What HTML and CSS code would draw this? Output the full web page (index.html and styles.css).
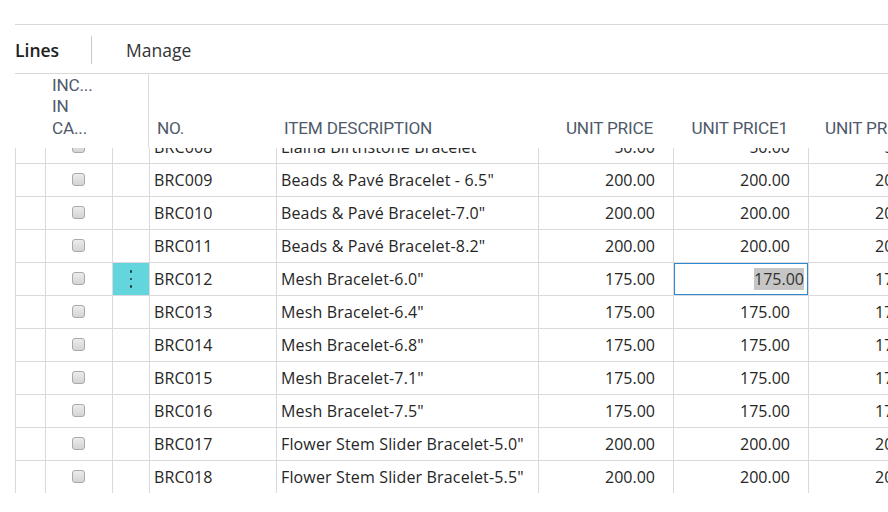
FILE: index.html
```html
<!DOCTYPE html>
<html>
<head>
<meta charset="utf-8">
<link rel="stylesheet" href="styles.css">
</head>
<body>
<div class="page">
  <div class="tabs">
    <span class="tab tab-active">Lines</span>
    <span class="tab-sep"></span>
    <span class="tab">Manage</span>
  </div>
  <div class="grid-wrap">
    <div class="head row-grid">
      <div class="hc hc-blank"></div>
      <div class="hc hc-inc">INC...<br>IN<br>CA...</div>
      <div class="hc hc-frozen-end"></div>
      <div class="hc">NO.</div>
      <div class="hc">ITEM DESCRIPTION</div>
      <div class="hc hc-num">UNIT PRICE</div>
      <div class="hc hc-num">UNIT PRICE1</div>
      <div class="hc hc-last">UNIT PRICE2</div>
    </div>
    <div class="body">
      <div class="rows">
        <div class="row row-grid"><div class="c c0"></div><div class="c c1"><span class="cb"></span></div><div class="c c2"></div><div class="c">BRC008</div><div class="c">Liaina Birthstone Bracelet</div><div class="c num">50.00</div><div class="c num">50.00</div><div class="c num">50.00</div></div>
        <div class="row row-grid"><div class="c c0"></div><div class="c c1"><span class="cb"></span></div><div class="c c2"></div><div class="c">BRC009</div><div class="c">Beads &amp; Pavé Bracelet - 6.5"</div><div class="c num">200.00</div><div class="c num">200.00</div><div class="c num">200.00</div></div>
        <div class="row row-grid"><div class="c c0"></div><div class="c c1"><span class="cb"></span></div><div class="c c2"></div><div class="c">BRC010</div><div class="c">Beads &amp; Pavé Bracelet-7.0"</div><div class="c num">200.00</div><div class="c num">200.00</div><div class="c num">200.00</div></div>
        <div class="row row-grid"><div class="c c0"></div><div class="c c1"><span class="cb"></span></div><div class="c c2"></div><div class="c">BRC011</div><div class="c">Beads &amp; Pavé Bracelet-8.2"</div><div class="c num">200.00</div><div class="c num">200.00</div><div class="c num">200.00</div></div>
        <div class="row row-grid"><div class="c c0"></div><div class="c c1"><span class="cb"></span></div><div class="c c2 c2-active"><span class="dots"><i></i><i></i><i></i></span></div><div class="c">BRC012</div><div class="c">Mesh Bracelet-6.0"</div><div class="c num">175.00</div><div class="c num c-edit"><span class="edit"><span class="sel">175.00</span></span></div><div class="c num">175.00</div></div>
        <div class="row row-grid"><div class="c c0"></div><div class="c c1"><span class="cb"></span></div><div class="c c2"></div><div class="c">BRC013</div><div class="c">Mesh Bracelet-6.4"</div><div class="c num">175.00</div><div class="c num">175.00</div><div class="c num">175.00</div></div>
        <div class="row row-grid"><div class="c c0"></div><div class="c c1"><span class="cb"></span></div><div class="c c2"></div><div class="c">BRC014</div><div class="c">Mesh Bracelet-6.8"</div><div class="c num">175.00</div><div class="c num">175.00</div><div class="c num">175.00</div></div>
        <div class="row row-grid"><div class="c c0"></div><div class="c c1"><span class="cb"></span></div><div class="c c2"></div><div class="c">BRC015</div><div class="c">Mesh Bracelet-7.1"</div><div class="c num">175.00</div><div class="c num">175.00</div><div class="c num">175.00</div></div>
        <div class="row row-grid"><div class="c c0"></div><div class="c c1"><span class="cb"></span></div><div class="c c2"></div><div class="c">BRC016</div><div class="c">Mesh Bracelet-7.5"</div><div class="c num">175.00</div><div class="c num">175.00</div><div class="c num">175.00</div></div>
        <div class="row row-grid"><div class="c c0"></div><div class="c c1"><span class="cb"></span></div><div class="c c2"></div><div class="c">BRC017</div><div class="c">Flower Stem Slider Bracelet-5.0"</div><div class="c num">200.00</div><div class="c num">200.00</div><div class="c num">200.00</div></div>
        <div class="row row-grid row-last"><div class="c c0"></div><div class="c c1"><span class="cb"></span></div><div class="c c2"></div><div class="c">BRC018</div><div class="c">Flower Stem Slider Bracelet-5.5"</div><div class="c num">200.00</div><div class="c num">200.00</div><div class="c num">200.00</div></div>
      </div>
    </div>
  </div>
</div>
</body>
</html>
```

FILE: styles.css
```css
* { box-sizing: border-box; }
html, body { margin: 0; padding: 0; background: #fff; }
body { width: 888px; height: 512px; overflow: hidden; }

.page {
  padding: 24px 0 0 15px;
  font-family: "Open Sans", "Noto Sans", sans-serif;
  color: #212121;
}

.tabs {
  height: 50px;
  border-top: 1px solid #d8d8d8;
  border-bottom: 1px solid #d8d8d8;
  display: flex;
  align-items: center;
  font-size: 17.5px;
  padding-top: 2px;
}
.tab { color: #333; }
.tab-active { font-weight: 600; color: #212121; }
.tab-sep {
  width: 1px;
  height: 28px;
  background: #c8c8c8;
  margin: 0 34px 0 32px;
}

.grid-wrap { width: 1000px; }

.row-grid {
  display: grid;
  grid-template-columns: 30px 67px 37px 127px 262px 135px 135px 135px;
}

.head {
  height: 74px;
  font-family: "Roboto", "DejaVu Sans Condensed", sans-serif;
  font-size: 17.2px;
  color: #4f5a6a;
  letter-spacing: -0.2px;
}
.hc {
  display: flex;
  align-items: flex-end;
  padding: 0 8px 9px 8px;
  line-height: 21.5px;
  white-space: nowrap;
}
.hc-blank { padding: 0; }
.hc-inc {
  padding: 0 0 9px 7px;
  display: block;
  align-self: end;
}
.hc-frozen-end { border-right: 1px solid #dcdcdc; padding: 0; }
.hc-num { justify-content: flex-end; padding-right: 20px; }
.hc-last { padding-left: 17px; }

.body {
  height: 345px;
  overflow: hidden;
}
.rows { margin-top: -17px; }

.row { height: 33px; }
.c {
  border-left: 1px solid #d9d9de;
  border-bottom: 1px solid #d9d9de;
  display: flex;
  align-items: center;
  padding: 0 4px 1px 4px;
  font-size: 16px;
  letter-spacing: 0.15px;
  white-space: nowrap;
  overflow: hidden;
  color: #262626;
}
.row-last .c0 { border-bottom-color: transparent; }
.num { justify-content: flex-end; padding-right: 18px; letter-spacing: 0; }
.c1 { justify-content: center; padding: 0 0 1px 0; }

.cb {
  width: 13px;
  height: 13px;
  border: 1px solid #a9a9a9;
  border-radius: 3px;
  background: linear-gradient(#ececec, #d4d4d4);
  margin-right: 2px;
}

.c2 { padding: 0; }
.c2-active {
  background: #63d5dd;
  justify-content: center;
}
.dots { display: flex; flex-direction: column; gap: 5px; }
.dots i {
  display: block;
  width: 2.5px;
  height: 2.5px;
  border-radius: 50%;
  background: #1e3d40;
}

.c-edit { padding: 0; }
.edit {
  width: 100%;
  height: 100%;
  border: 1px solid #2f88d2;
  display: flex;
  align-items: center;
  justify-content: flex-end;
  padding-right: 3px;
}
.sel {
  background: #c6c6c6;
  color: #333;
}
```
